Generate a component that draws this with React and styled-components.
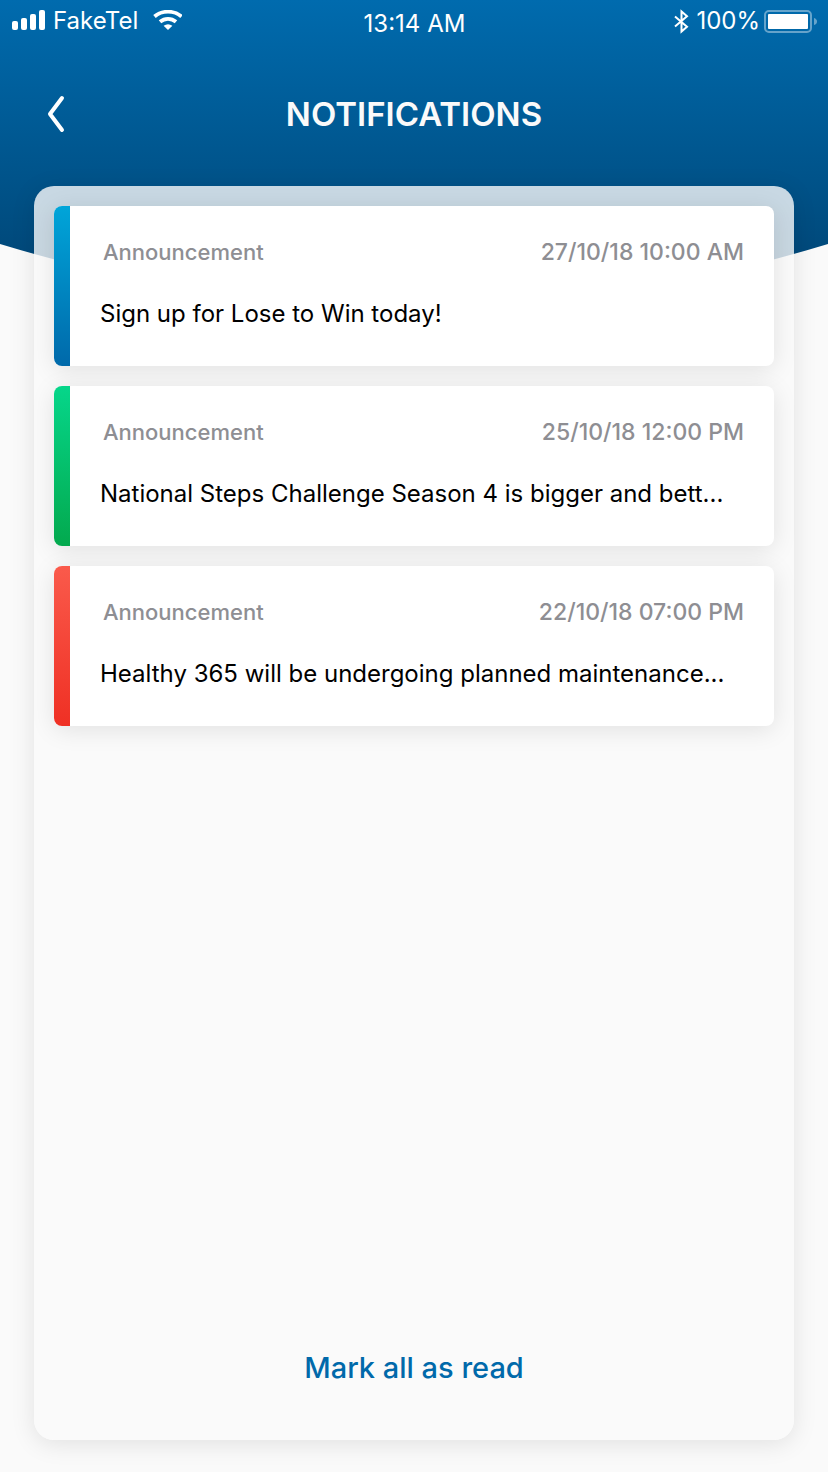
import React from "react";
import styled, { createGlobalStyle } from "styled-components";

const GlobalStyle = createGlobalStyle`
  *, *::before, *::after { box-sizing: border-box; }
  body {
    margin: 0;
    background: #fafafa;
    color: #000;
    font-family: Inter, "Liberation Sans", sans-serif;
  }
  button { font: inherit; border: 0; background: none; cursor: pointer; }
`;

const Screen = styled.div`
  position: relative;
  display: flex;
  flex-direction: column;
  min-height: 100vh;
  padding-bottom: 32px;
`;

const Backdrop = styled.svg`
  position: absolute;
  inset: 0 0 auto;
  z-index: -1;
  width: 100%;
  height: 308px;
`;

const StatusBar = styled.div`
  display: grid;
  grid-template-columns: 1fr auto 1fr;
  align-items: start;
  height: 48px;
  padding: 6px 11px 0 12px;
  color: #fff;
  font-size: 24px;
  line-height: 30px;
`;

const StatusGroup = styled.div`
  display: flex;
  align-items: center;
  justify-content: ${(p) => (p.$end ? "flex-end" : "flex-start")};
  gap: ${(p) => (p.$end ? "7px" : "8px")};

  svg { flex: none; }
`;

const Time = styled.time`
  padding-top: 3px;
`;

const Header = styled.header`
  display: grid;
  grid-template-columns: 48px 1fr 48px;
  align-items: center;
  height: 138px;
  padding: 0 32px 6px;
`;

const BackButton = styled.button`
  display: grid;
  place-items: center;
  width: 48px;
  height: 48px;
  padding: 0;
  color: #fff;
`;

const Title = styled.h1`
  margin: 0;
  color: #fafafa;
  font-size: 33px;
  font-weight: 600;
  line-height: 42px;
  text-align: center;
`;

const Panel = styled.main`
  display: flex;
  flex: 1;
  flex-direction: column;
  justify-content: space-between;
  gap: 40px;
  margin: 0 34px;
  padding: 20px 20px 48px;
  border-radius: 20px;
  background: rgba(250, 250, 250, 0.8);
  box-shadow: 0 4px 24px rgba(0, 0, 0, 0.1);
`;

const CardList = styled.ul`
  display: flex;
  flex-direction: column;
  gap: 20px;
  margin: 0;
  padding: 0;
  list-style: none;
`;

const Card = styled.li`
  display: flex;
  height: 160px;
  overflow: hidden;
  border-radius: 8px;
  background: #fff;
  box-shadow: 0 4px 24px rgba(0, 0, 0, 0.1);
`;

const Stripe = styled.div`
  flex: none;
  width: 16px;
  background: linear-gradient(${(p) => p.$from}, ${(p) => p.$to});
`;

const CardBody = styled.div`
  flex: 1;
  min-width: 0;
  padding: 32px 30px;
`;

const Meta = styled.div`
  display: flex;
  justify-content: space-between;
  padding-left: 3px;
  color: #8e8e93;
  font-size: 22px;
  font-weight: 500;
  line-height: 28px;
`;

const DateText = styled.time`
  font-size: 23px;
`;

const Message = styled.p`
  margin: 32px 0 0;
  overflow: hidden;
  font-size: 24px;
  line-height: 32px;
  text-overflow: ellipsis;
  white-space: nowrap;
`;

const MarkRead = styled.button`
  align-self: center;
  padding: 4px 12px;
  color: #0069aa;
  font-size: 29px;
  font-weight: 500;
  line-height: 40px;
`;

const notifications = [
  { date: "27/10/18 10:00 AM", text: "Sign up for Lose to Win today!", from: "#00a5d9", to: "#0069aa" },
  { date: "25/10/18 12:00 PM", text: "National Steps Challenge Season 4 is bigger and bett...", from: "#06d68a", to: "#03a94e" },
  { date: "22/10/18 07:00 PM", text: "Healthy 365 will be undergoing planned maintenance...", from: "#fa5a4b", to: "#ef3024" },
];

function SignalIcon() {
  return (
    <svg width="33" height="22" viewBox="0 0 33 22" fill="currentColor" aria-hidden="true">
      <rect x="0" y="11" width="6" height="9" rx="2" />
      <rect x="9" y="8" width="6" height="12" rx="2" />
      <rect x="18" y="4" width="6" height="16" rx="2" />
      <rect x="27" y="0" width="6" height="20" rx="2" />
    </svg>
  );
}

function WifiIcon() {
  return (
    <svg width="36" height="22" viewBox="0 0 36 22" fill="none" stroke="currentColor" aria-hidden="true">
      <path d="M8.500 6.500Q14 1.700 22 1.700T35.500 6.500" strokeWidth="3.800" />
      <path d="M14 11.800Q17.600 8.800 22 8.800T30 11.800" strokeWidth="3.800" />
      <path d="M17.600 15.800Q22 12.700 26.400 15.800L22 20Z" fill="currentColor" stroke="none" />
    </svg>
  );
}

function BluetoothIcon() {
  return (
    <svg width="15" height="26" viewBox="0 0 15 26" fill="none" stroke="currentColor" strokeWidth="2" aria-hidden="true">
      <path d="M1 8.500L13 18.800L7.500 23.500V3.500L13 8.200L1 18.500" />
    </svg>
  );
}

function BatteryIcon() {
  return (
    <svg width="50" height="26" viewBox="3 0 50 26" overflow="visible" fill="none" aria-hidden="true">
      <rect x="1" y="3" width="46" height="21" rx="4" stroke="#fff" strokeOpacity="0.4" strokeWidth="2" />
      <path d="M50 10Q53 11 53 13.500T50 17Z" fill="#fff" fillOpacity="0.4" />
      <rect x="4" y="6" width="40" height="15" rx="1" fill="#fff" />
    </svg>
  );
}

export default function App() {
  return (
    <Screen>
      <GlobalStyle />
      <Backdrop viewBox="0 0 828 308" preserveAspectRatio="none" aria-hidden="true">
        <defs>
          <linearGradient id="sky" x1="0" y1="0" x2="0" y2="1">
            <stop offset="0" stopColor="#006bae" />
            <stop offset="1" stopColor="#004270" />
          </linearGradient>
        </defs>
        <path d="M0 0H828V244Q414 370 0 244Z" fill="url(#sky)" />
      </Backdrop>

      <StatusBar>
        <StatusGroup>
          <SignalIcon />
          <span>FakeTel</span>
          <WifiIcon />
        </StatusGroup>
        <Time>13:14 AM</Time>
        <StatusGroup $end>
          <BluetoothIcon />
          <span>100%</span>
          <BatteryIcon />
        </StatusGroup>
      </StatusBar>

      <Header>
        <BackButton type="button" aria-label="Back">
          <svg width="20" height="38" viewBox="0 0 20 38" fill="none" stroke="currentColor" strokeWidth="4" strokeLinecap="round" strokeLinejoin="round">
            <path d="M16 3L4 19L16 35" />
          </svg>
        </BackButton>
        <Title>NOTIFICATIONS</Title>
      </Header>

      <Panel>
        <CardList>
          {notifications.map((n) => (
            <Card key={n.date}>
              <Stripe $from={n.from} $to={n.to} />
              <CardBody>
                <Meta>
                  <span>Announcement</span>
                  <DateText>{n.date}</DateText>
                </Meta>
                <Message>{n.text}</Message>
              </CardBody>
            </Card>
          ))}
        </CardList>
        <MarkRead type="button">Mark all as read</MarkRead>
      </Panel>
    </Screen>
  );
}
